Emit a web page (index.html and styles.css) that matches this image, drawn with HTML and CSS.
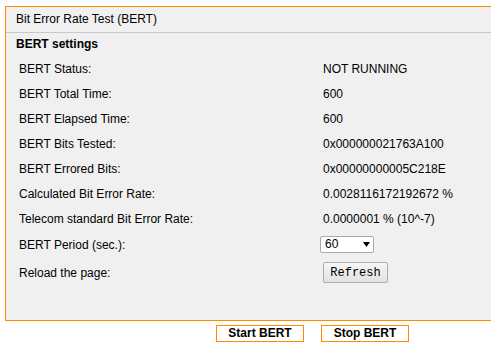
FILE: index.html
```html
<!DOCTYPE html>
<html>
<head>
<meta charset="utf-8">
<link rel="stylesheet" href="styles.css">
</head>
<body>
<div class="page">
  <div class="panel">
    <div class="panel-title">Bit Error Rate Test (BERT)</div>
    <div class="section-title">BERT settings</div>
    <div class="rows">
      <div class="row"><span class="label">BERT Status:</span><span class="value">NOT RUNNING</span></div>
      <div class="row"><span class="label">BERT Total Time:</span><span class="value">600</span></div>
      <div class="row"><span class="label">BERT Elapsed Time:</span><span class="value">600</span></div>
      <div class="row"><span class="label">BERT Bits Tested:</span><span class="value">0x000000021763A100</span></div>
      <div class="row"><span class="label">BERT Errored Bits:</span><span class="value">0x00000000005C218E</span></div>
      <div class="row"><span class="label">Calculated Bit Error Rate:</span><span class="value">0.0028116172192672 %</span></div>
      <div class="row"><span class="label">Telecom standard Bit Error Rate:</span><span class="value">0.0000001 % (10^-7)</span></div>
      <div class="row row-period"><span class="label">BERT Period (sec.):</span><span class="value"><select class="period"><option>60</option></select></span></div>
      <div class="row row-reload"><span class="label">Reload the page:</span><span class="value"><button class="refresh">Refresh</button></span></div>
    </div>
  </div>
  <div class="actions">
    <button class="action">Start BERT</button>
    <button class="action">Stop BERT</button>
  </div>
</div>
</body>
</html>
```
FILE: styles.css
```css
html, body {
  margin: 0;
  padding: 0;
  overflow: hidden;
  background: #fff;
}
body {
  font-family: "Liberation Sans", Arial, sans-serif;
  font-size: 12px;
  color: #000;
}
.page {
  padding: 6px 0 0 5px;
}
.panel {
  border: 1px solid #ff8a00;
  border-right: none;
  background: #f0f0f0;
  height: 313px;
}
.panel-title {
  height: 25px;
  line-height: 25px;
  padding-left: 10px;
  border-bottom: 1px solid #c8c8c8;
}
.section-title {
  font-weight: bold;
  height: 23px;
  line-height: 23px;
  padding-left: 10px;
}
.rows {
  display: flex;
  flex-direction: column;
}
.row {
  display: grid;
  grid-template-columns: 317px 1fr;
  height: 25px;
  align-items: center;
}
.row-period {
  height: 27px;
}
.row-reload {
  height: 29px;
}
.label {
  padding-left: 13px;
}
.value {
  display: flex;
  align-items: center;
}
.row-period .value {
  margin-left: -3px;
}
.period {
  appearance: none;
  -webkit-appearance: none;
  width: 54px;
  height: 17px;
  border: 1px solid #a9a9a9;
  border-radius: 2px;
  background: #fff url("data:image/svg+xml;utf8,<svg xmlns='http://www.w3.org/2000/svg' width='7' height='5'><path d='M0 0H7L3.5 5Z' fill='black'/></svg>") no-repeat 42px 5px;
  font-family: "Liberation Sans", Arial, sans-serif;
  font-size: 12px;
  color: #000;
  padding: 0 0 0 4px;
  margin: 0;
  line-height: 15px;
}
.refresh {
  width: 65px;
  height: 21px;
  border: 1px solid #adadad;
  border-radius: 2px;
  background: linear-gradient(#f6f6f6, #e2e2e2);
  font-family: "Liberation Mono", "Courier New", monospace;
  font-size: 12px;
  color: #000;
  padding: 0;
  margin: 0;
}
.actions {
  display: flex;
  gap: 17px;
  margin-top: 4px;
  margin-left: 211px;
}
.action {
  width: 88px;
  height: 17px;
  border: 1px solid #ff8a00;
  background: #fff;
  font-family: "Liberation Sans", Arial, sans-serif;
  font-weight: bold;
  font-size: 12px;
  color: #000;
  padding: 0;
  margin: 0;
  line-height: 15px;
}
```
